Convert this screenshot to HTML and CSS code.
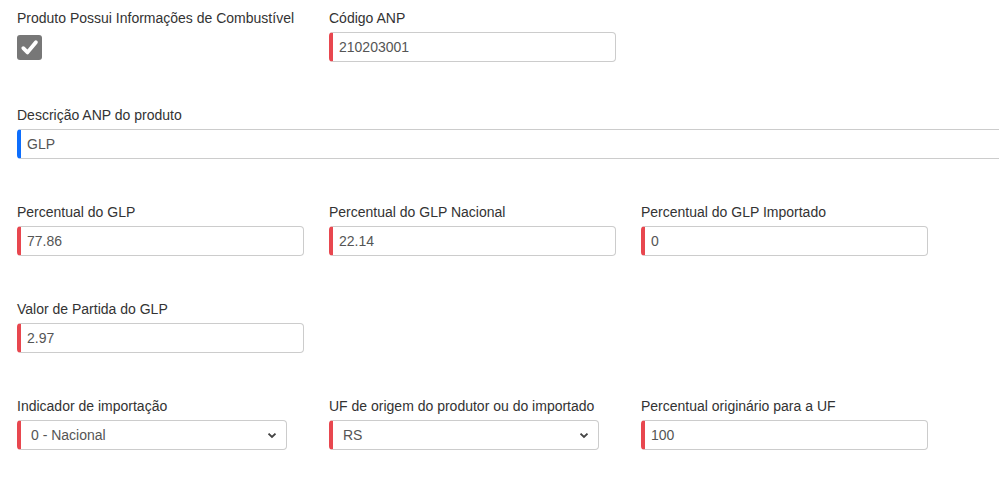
FILE: index.html
```html
<!DOCTYPE html>
<html lang="pt-BR">
<head>
<meta charset="utf-8">
<title>Combustível</title>
<link rel="stylesheet" href="styles.css">
</head>
<body>
<div class="form">
  <div class="row">
    <div class="col">
      <label class="lbl">Produto Possui Informações de Combustível</label>
      <span class="check">
        <svg viewBox="0 0 25 25" width="25" height="25"><path d="M6.3 13.2 L10.5 17.4 L18.9 7.3" fill="none" stroke="#fff" stroke-width="3.8" stroke-linecap="round" stroke-linejoin="round"/></svg>
      </span>
    </div>
    <div class="col">
      <label class="lbl">Código ANP</label>
      <input class="inp req" type="text" value="210203001">
    </div>
  </div>
  <div class="row clip">
    <div class="col wide">
      <label class="lbl">Descrição ANP do produto</label>
      <input class="inp info full" type="text" value="GLP">
    </div>
  </div>
  <div class="row">
    <div class="col">
      <label class="lbl">Percentual do GLP</label>
      <input class="inp req" type="text" value="77.86">
    </div>
    <div class="col">
      <label class="lbl">Percentual do GLP Nacional</label>
      <input class="inp req" type="text" value="22.14">
    </div>
    <div class="col">
      <label class="lbl">Percentual do GLP Importado</label>
      <input class="inp req" type="text" value="0">
    </div>
  </div>
  <div class="row">
    <div class="col">
      <label class="lbl">Valor de Partida do GLP</label>
      <input class="inp req" type="text" value="2.97">
    </div>
  </div>
  <div class="row">
    <div class="col">
      <label class="lbl">Indicador de importação</label>
      <select class="inp req sel"><option>0 - Nacional</option></select>
    </div>
    <div class="col">
      <label class="lbl">UF de origem do produtor ou do importado</label>
      <select class="inp req sel"><option>RS</option></select>
    </div>
    <div class="col">
      <label class="lbl">Percentual originário para a UF</label>
      <input class="inp req" type="text" value="100">
    </div>
  </div>
</div>
</body>
</html>
```
FILE: styles.css
```css
html, body {
  margin: 0;
  padding: 0;
  background: #fff;
  overflow: hidden;
}
body {
  font-family: "Liberation Sans", Arial, sans-serif;
  font-size: 14px;
  color: #333;
}
.form {
  padding: 8px 0 0 17px;
}
.row {
  display: flex;
  margin-bottom: 43px;
}
.row.clip {
  overflow: hidden;
}
.col {
  width: 312px;
  flex: none;
  display: flex;
  flex-direction: column;
  align-items: flex-start;
}
.col.wide {
  flex: 1 1 auto;
  width: auto;
  min-width: 0;
}
.lbl {
  display: block;
  height: 20px;
  line-height: 20px;
  margin-bottom: 4px;
  white-space: nowrap;
}
.check {
  display: block;
  width: 25px;
  height: 25px;
  margin-top: 3px;
  background: #777;
  border-radius: 3px;
}
.check svg {
  display: block;
}
.inp {
  box-sizing: border-box;
  width: 287px;
  height: 30px;
  margin: 0;
  padding: 0 6px;
  border: 1px solid #ccc;
  border-radius: 4px;
  background: #fff;
  font-family: "Liberation Sans", Arial, sans-serif;
  font-size: 14px;
  color: #555;
  outline: none;
}
.inp.req {
  border-left: 4px solid #e8474f;
}
.inp.info {
  border-left: 4px solid #0d6efd;
}
.inp.full {
  width: calc(100% + 8px);
}
.sel {
  width: 270px;
  padding: 0 24px 0 10px;
  -webkit-appearance: none;
  appearance: none;
  background-image: url("data:image/svg+xml;utf8,<svg xmlns='http://www.w3.org/2000/svg' width='10' height='7' viewBox='0 0 10 7'><path d='M1.5 1.6 L5 5 L8.5 1.6' fill='none' stroke='%23444' stroke-width='1.9'/></svg>");
  background-repeat: no-repeat;
  background-position: right 9px center;
  background-size: 10px 7px;
}
```
